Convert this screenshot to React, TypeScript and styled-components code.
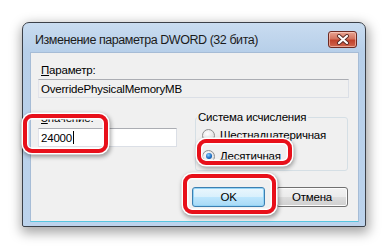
import React from 'react';
import styled, { createGlobalStyle } from 'styled-components';

const GlobalStyle = createGlobalStyle`
  html, body {
    margin: 0;
    padding: 0;
    background: #ffffff;
  }
  body {
    font-family: "Liberation Sans", Arial, sans-serif;
    font-size: 11.5px;
    color: #000;
  }
`;

const Page = styled.div`
  width: 389px;
  height: 249px;
  padding: 22px 0 0 22px;
  box-sizing: border-box;
  overflow: hidden;
`;

const Window = styled.div`
  width: 344px;
  height: 205px;
  box-sizing: border-box;
  border: 1px solid #3b4048;
  border-radius: 7px 7px 2px 2px;
  background: linear-gradient(180deg, #c9dcf0 0%, #b7cfe9 14%, #bcd3ec 100%);
  box-shadow: 1px 4px 12px 2px rgba(0, 0, 0, 0.35);
  display: flex;
  flex-direction: column;
  padding: 0 6px 4px 7px;
`;

const TitleBar = styled.div`
  height: 29px;
  box-sizing: border-box;
  padding: 6px 0 0 5px;
  display: flex;
  align-items: center;
  justify-content: space-between;
`;

const Title = styled.span`
  font-size: 12.5px;
  color: #1b1b1b;
  letter-spacing: -0.45px;
  margin-top: -2px;
`;

const CloseButton = styled.div`
  width: 29px;
  height: 17px;
  box-sizing: border-box;
  margin-top: -3px;
  margin-right: 2px;
  border: 1px solid #6d2a22;
  border-radius: 3px;
  background: linear-gradient(180deg, #e8a493 0%, #d4745f 45%, #c0412a 55%, #d0674f 100%);
  box-shadow: inset 0 0 0 1px rgba(255, 220, 210, 0.55);
  display: flex;
  align-items: center;
  justify-content: center;
`;

const Client = styled.div`
  flex: 1;
  position: relative;
  background: #f0f0f0;
  border: 1px solid #a6bcd6;
  border-bottom-color: #57c6e0;
  padding: 10px 10px 0 7px;
`;

const Label = styled.div`
  padding-left: 3px;
  height: 14px;
  line-height: 14px;
  letter-spacing: -0.2px;
`;

const Key = styled.span`
  text-decoration: underline;
  text-underline-offset: 1px;
`;

const TextBox = styled.div<{ $readOnly?: boolean; $width: number }>`
  width: ${p => p.$width}px;
  height: 19px;
  box-sizing: border-box;
  margin-top: ${p => (p.$readOnly ? 2 : 3)}px;
  border: 1px solid #dbdfe6;
  border-top-color: #abadb3;
  border-left-color: #e2e3ea;
  background: ${p => (p.$readOnly ? '#f0f0f0' : '#ffffff')};
  padding-left: 2px;
  display: flex;
  align-items: center;
  letter-spacing: -0.2px;
`;

const Caret = styled.span`
  display: inline-block;
  width: 1px;
  height: 13px;
  background: #000;
  margin-left: 1px;
`;

const Row = styled.div`
  display: flex;
  margin-top: 13px;
  gap: 18px;
`;

const LeftCol = styled.div`
  display: flex;
  flex-direction: column;
`;

const Group = styled.fieldset`
  margin: -1px 0 0 0;
  width: 154px;
  height: 61px;
  box-sizing: border-box;
  border: 1px solid #d5dfe5;
  border-radius: 3px;
  padding: 4px 0 0 6px;
  display: flex;
  flex-direction: column;
  gap: 7px;
`;

const Legend = styled.legend`
  padding: 0 2px 0 1px;
  margin-left: -5px;
  line-height: 14px;
  letter-spacing: -0.2px;
`;

const RadioRow = styled.div`
  display: flex;
  align-items: center;
  gap: 5px;
  height: 14px;
  letter-spacing: -0.2px;
`;

const RadioCircle = styled.span<{ $checked?: boolean }>`
  width: 11px;
  height: 11px;
  border-radius: 50%;
  border: 1px solid #8f8f8f;
  background: radial-gradient(circle at 40% 35%, #ffffff 0%, #e6e6e6 60%, #cfcfcf 100%);
  display: flex;
  align-items: center;
  justify-content: center;
  &::after {
    content: '';
    display: ${p => (p.$checked ? 'block' : 'none')};
    width: 6px;
    height: 6px;
    border-radius: 50%;
    background: radial-gradient(circle at 40% 35%, #8fd0ff 0%, #1d6fc4 55%, #0b3f86 100%);
  }
`;

const ButtonRow = styled.div`
  display: flex;
  justify-content: flex-end;
  gap: 11px;
  margin-top: 16px;
`;

const Button = styled.div<{ $default?: boolean }>`
  width: ${p => (p.$default ? 73 : 72)}px;
  height: 20px;
  box-sizing: border-box;
  border: 1px solid ${p => (p.$default ? '#3c7fb1' : '#707070')};
  border-radius: 3px;
  background: ${p =>
    p.$default
      ? 'linear-gradient(180deg, #eaf6fd 0%, #d9f0fc 50%, #bee6fd 51%, #a7d9f5 100%)'
      : 'linear-gradient(180deg, #f2f2f2 0%, #ebebeb 50%, #dddddd 51%, #cfcfcf 100%)'};
  box-shadow: inset 0 0 0 1px ${p => (p.$default ? '#94d4f6' : '#fcfcfc')};
  display: flex;
  align-items: center;
  justify-content: center;
  letter-spacing: -0.2px;
`;

const Highlight = styled.div`
  position: absolute;
  box-sizing: border-box;
  border: 4px solid #e8101a;
  border-radius: 9px;
  box-shadow: 0 0 0 1.5px #ffffff, inset 0 0 0 1.5px #ffffff, 1px 2px 4px 1.5px rgba(0, 0, 0, 0.35);
  pointer-events: none;
`;

const CloseGlyph = () => (
  <svg width="14" height="11" viewBox="0 0 14 11">
    <path d="M3 2 L11 9 M11 2 L3 9" stroke="#5a2a24" strokeWidth="4" strokeLinecap="round" fill="none" />
    <path d="M3 2 L11 9 M11 2 L3 9" stroke="#ffffff" strokeWidth="2.2" strokeLinecap="round" fill="none" />
  </svg>
);

const App: React.FC = () => (
  <>
    <GlobalStyle />
    <Page>
      <Window>
        <TitleBar>
          <Title>Изменение параметра DWORD (32 бита)</Title>
          <CloseButton>
            <CloseGlyph />
          </CloseButton>
        </TitleBar>
        <Client>
          <Label>
            <Key>П</Key>араметр:
          </Label>
          <TextBox $readOnly $width={311}>OverridePhysicalMemoryMB</TextBox>
          <Row>
            <LeftCol>
              <Label>
                <Key>З</Key>начение:
              </Label>
              <TextBox $width={139}>
                24000
                <Caret />
              </TextBox>
            </LeftCol>
            <Group>
              <Legend>Система исчисления</Legend>
              <RadioRow>
                <RadioCircle />
                <span>
                  <Key>Ш</Key>естнадцатеричная
                </span>
              </RadioRow>
              <RadioRow>
                <RadioCircle $checked />
                <span>
                  <Key>Д</Key>есятичная
                </span>
              </RadioRow>
            </Group>
          </Row>
          <ButtonRow>
            <Button $default>OK</Button>
            <Button>Отмена</Button>
          </ButtonRow>
          <Highlight style={{ left: -8, top: 61, width: 85, height: 39 }} />
          <Highlight style={{ left: 166, top: 86, width: 95, height: 26 }} />
          <Highlight style={{ left: 152, top: 121, width: 93, height: 40 }} />
        </Client>
      </Window>
    </Page>
  </>
);

export default App;
